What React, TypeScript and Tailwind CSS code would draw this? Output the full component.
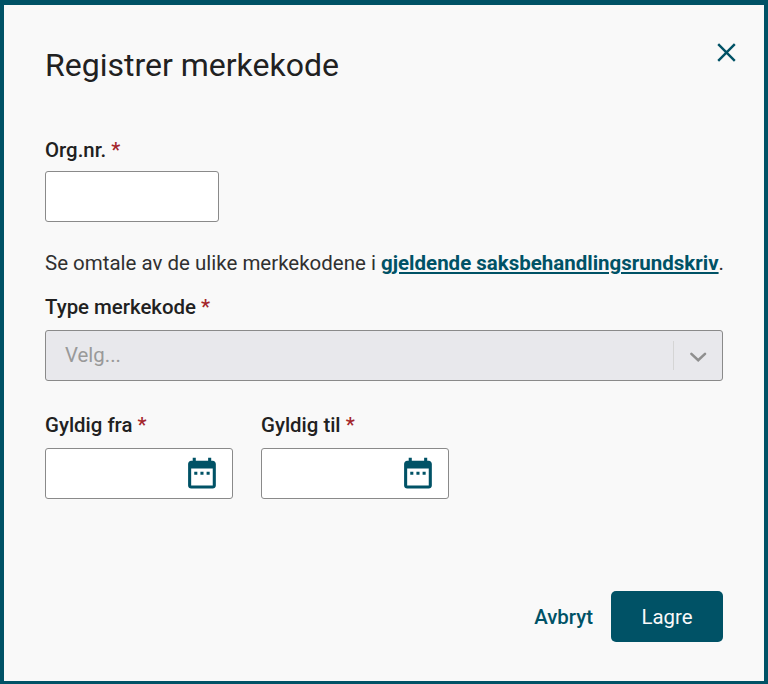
import type { ReactNode } from "react";

function Label({ children }: { children: ReactNode }) {
  return (
    <label className="block h-6 text-[20.4px] leading-6 font-medium whitespace-nowrap text-[#212121]">
      {children} <span className="text-[#a4262c]">*</span>
    </label>
  );
}

function CalendarIcon() {
  return (
    <svg className="h-[37px] w-[37px] fill-[#005266]" viewBox="-0.3 0.2 24 24">
      <path d="M9 11H7v2h2v-2zm4 0h-2v2h2v-2zm4 0h-2v2h2v-2zm2-7h-1V2h-2v2H8V2H6v2H5c-1.11 0-1.99.9-1.99 2L3 20c0 1.1.89 2 2 2h14c1.1 0 2-.9 2-2V6c0-1.1-.9-2-2-2zm0 16H5V9h14v11z" />
    </svg>
  );
}

function DateField({ label }: { label: string }) {
  return (
    <div>
      <Label>{label}</Label>
      <div className="mt-[11px] flex h-[51px] w-[188px] items-center justify-end rounded-[3px] border border-[#8a8a8a] bg-white pr-[12px]">
        <CalendarIcon />
      </div>
    </div>
  );
}

export default function App() {
  return (
    <div className="h-[684px] w-[768px] border-x-4 border-t-5 border-b-3 border-[#005266] bg-[#f9f9f9] pl-[41px] font-['Roboto',sans-serif] text-[#212121]">
      <header className="flex h-[133px] w-[691px] items-start justify-between">
        <h1 className="mt-[40px] text-[32px] leading-10 font-normal whitespace-nowrap">Registrer merkekode</h1>
        <button className="mt-[38px]" aria-label="Lukk">
          <svg className="h-[19px] w-[19px]" viewBox="0 0 19 19" fill="none" stroke="#005266" strokeWidth="2.4">
            <path d="M1.2 1.2L17.8 17.8M17.8 1.2L1.2 17.8" />
          </svg>
        </button>
      </header>
      <Label>Org.nr.</Label>
      <div className="mt-[9px] h-[51px] w-[174px] rounded-[3px] border border-[#8a8a8a] bg-white" />
      <p className="mt-[29px] h-6 text-[20.49px] leading-6 whitespace-nowrap text-[#303030]">
        Se omtale av de ulike merkekodene i{" "}
        <a className="font-bold text-[#005266] underline">gjeldende saksbehandlingsrundskriv</a>.
      </p>
      <div className="mt-[20px]">
        <Label>Type merkekode</Label>
      </div>
      <div className="mt-[11px] flex h-[51px] w-[678px] items-center rounded-[3px] border border-[#8a8a8a] bg-[#e8e8ec] text-[20.4px] text-[#999999]">
        <span className="flex-1 pb-[2px] pl-[19px] leading-6">Velg...</span>
        <span className="h-[29px] w-px bg-[#d5d5d5]" />
        <span className="flex w-[48px] justify-center">
          <svg className="mt-[2px] h-4 w-[18px]" viewBox="0 0 18 16" fill="none" stroke="#8f8f8f" strokeWidth="2.6" strokeLinecap="round">
            <path d="M2.4 4.9L9.2 11.2L16 4.9" />
          </svg>
        </span>
      </div>
      <div className="mt-[32px] flex gap-[28px]">
        <DateField label="Gyldig fra" />
        <DateField label="Gyldig til" />
      </div>
      <div className="mt-[92px] flex w-[678px] items-center justify-end text-[20.4px] leading-6 font-medium">
        <button className="mr-[18px] text-[#005266]">Avbryt</button>
        <button className="h-[51px] w-[112px] rounded-[5px] bg-[#005266] font-normal text-[#f9f9f9]">Lagre</button>
      </div>
    </div>
  );
}
